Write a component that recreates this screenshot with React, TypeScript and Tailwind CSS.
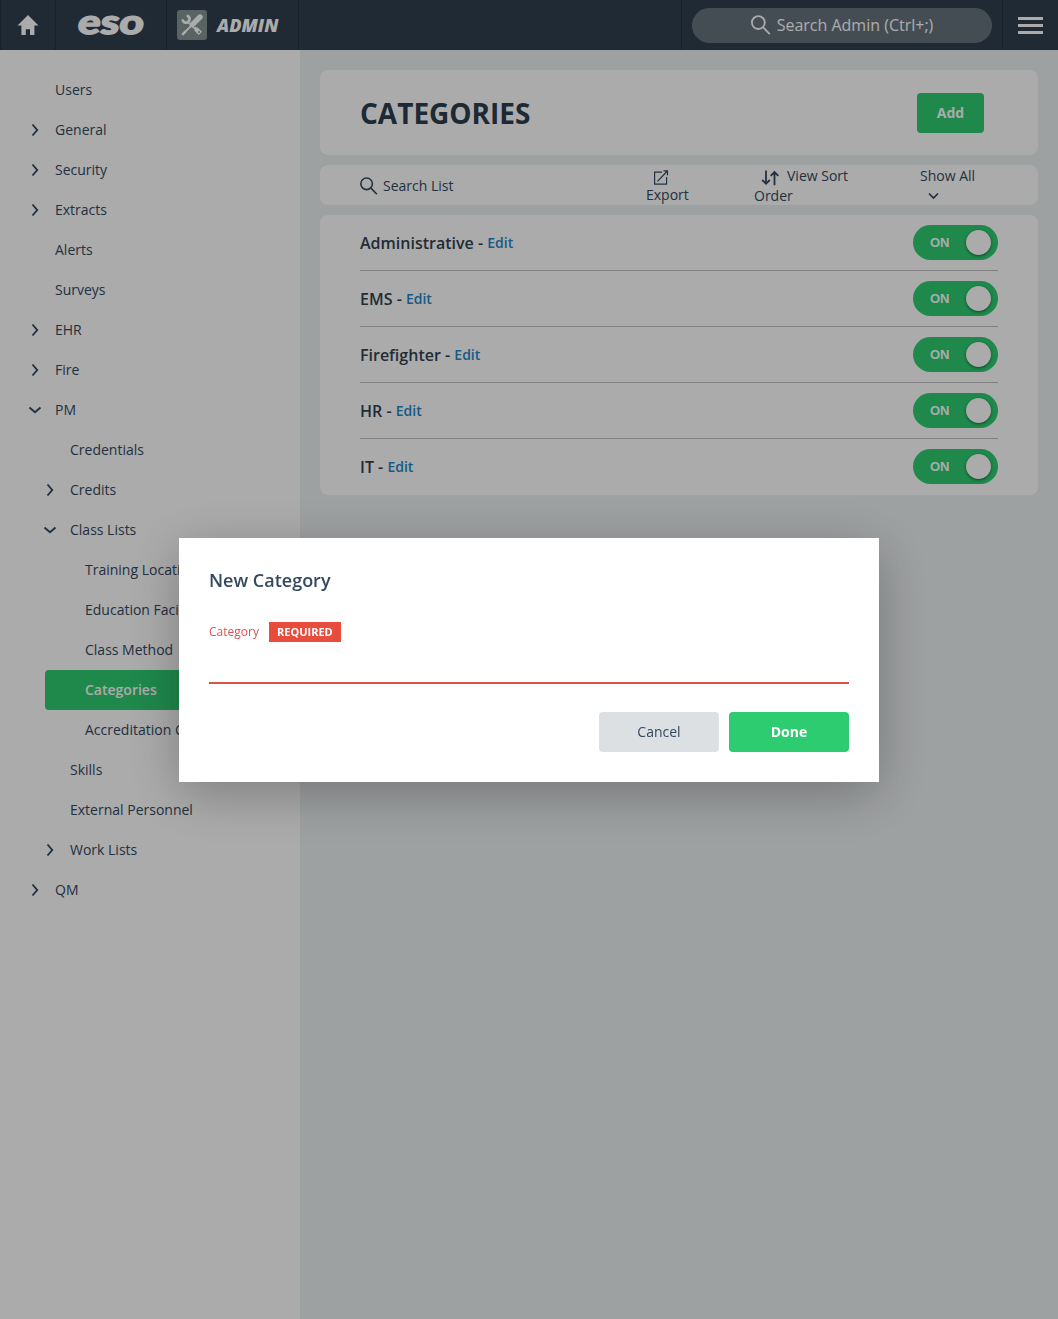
import { useState } from 'react';

type NavItem = {
  label: string;
  level: 0 | 1 | 2;
  state?: 'open' | 'closed';
  active?: boolean;
};

const navItems: NavItem[] = [
  { label: 'Users', level: 0 },
  { label: 'General', level: 0, state: 'closed' },
  { label: 'Security', level: 0, state: 'closed' },
  { label: 'Extracts', level: 0, state: 'closed' },
  { label: 'Alerts', level: 0 },
  { label: 'Surveys', level: 0 },
  { label: 'EHR', level: 0, state: 'closed' },
  { label: 'Fire', level: 0, state: 'closed' },
  { label: 'PM', level: 0, state: 'open' },
  { label: 'Credentials', level: 1 },
  { label: 'Credits', level: 1, state: 'closed' },
  { label: 'Class Lists', level: 1, state: 'open' },
  { label: 'Training Locations', level: 2 },
  { label: 'Education Facilities', level: 2 },
  { label: 'Class Method', level: 2 },
  { label: 'Categories', level: 2, active: true },
  { label: 'Accreditation Codes', level: 2 },
  { label: 'Skills', level: 1 },
  { label: 'External Personnel', level: 1 },
  { label: 'Work Lists', level: 1, state: 'closed' },
  { label: 'QM', level: 0, state: 'closed' },
];

const levelMargin = ['ml-[15px]', 'ml-[30px]', 'ml-[45px]'];

const categories = ['Administrative', 'EMS', 'Firefighter', 'HR', 'IT'];

function Chevron({ open }: { open: boolean }) {
  return (
    <svg width="14" height="14" viewBox="0 0 14 14" fill="none" stroke="currentColor" strokeWidth="1.9">
      <path d={open ? 'M1.5 4.5 7 9.2l5.5-4.7' : 'M4.5 1.5 9.2 7l-4.7 5.5'} />
    </svg>
  );
}

function SearchIcon({ size }: { size: number }) {
  return (
    <svg width={size} height={size} viewBox="0 0 18 18" fill="none" stroke="currentColor" strokeWidth="1.6">
      <circle cx="6.6" cy="6.8" r="5.8" />
      <path d="m10.7 10.9 6.2 6.3" />
    </svg>
  );
}

function Header() {
  return (
    <header className="flex h-[50px] items-stretch bg-[#2f3f50] text-white">
      <div className="flex w-14 items-center justify-center border-x border-[#263442]">
        <svg width="22" height="20" viewBox="0 0 22 20" fill="currentColor">
          <path d="M11 0 .5 10.4h3.9V20h4.4v-5.8h4.2V20h4.4v-9.6h4.1z" />
        </svg>
      </div>
      <div className="flex w-[111px] items-center justify-center border-r border-[#263442]">
        <svg width="90" height="50" viewBox="0 0 90 50" fill="currentColor">
          <text
            x="15"
            y="34.5"
            textLength="66"
            lengthAdjust="spacingAndGlyphs"
            transform="skewX(-7)"
            className="font-['Lato'] text-[34px] font-black"
            stroke="currentColor"
            strokeWidth="1.4"
          >
            eso
          </text>
        </svg>
      </div>
      <div className="flex w-[132px] items-center border-r border-[#263442] pl-2.5">
        <span className="flex size-[30px] items-center justify-center rounded-[3px] bg-[#839492]">
          <svg width="22" height="22" viewBox="0 0 22 22" fill="none" stroke="currentColor">
            <path d="M6.5 6.5 16 16" strokeWidth="3" />
            <path d="M14.8 14.8 19.4 19.4" strokeWidth="4.6" />
            <circle cx="18" cy="18" r="1" fill="#839492" stroke="none" />
            <path d="M5.6 1.7A3.5 3.5 0 1 1 1.6 5.4" strokeWidth="2.6" />
            <path d="M11 11 18.6 3.4" strokeWidth="7.4" stroke="#839492" />
            <path d="M11.4 10.6 19 3" strokeWidth="5.4" strokeLinecap="round" />
            <path d="M11 11 3 19" strokeWidth="1.8" />
            <path d="m1.2 20.8 3.6-3.6" strokeWidth="2.6" />
          </svg>
        </span>
        <span className="mt-0.5 ml-2.5 text-[18px] font-extrabold italic">ADMIN</span>
      </div>
      <div className="ml-auto flex w-[322px] items-center justify-center border-x border-[#263442]">
        <div className="mt-px flex h-[35px] w-[300px] items-center justify-center gap-1.5 rounded-full bg-[#67737e] pb-0.5 text-base">
          <SearchIcon size={20} />
          <span>Search Admin (Ctrl+;)</span>
        </div>
      </div>
      <div className="flex w-[55px] flex-col items-center justify-center gap-1 pt-px">
        <span className="h-[3px] w-[25px] bg-white" />
        <span className="h-[3px] w-[25px] bg-white" />
        <span className="h-[3px] w-[25px] bg-white" />
      </div>
    </header>
  );
}

function Sidebar() {
  return (
    <nav className="w-[300px] shrink-0 bg-white pt-5">
      {navItems.map(item => (
        <a
          key={item.label}
          className={`flex h-10 items-center rounded-l ${levelMargin[item.level]} ${
            item.active ? 'bg-[#2ecc71] font-semibold text-white' : ''
          }`}
        >
          <span className="flex w-10 justify-center">{item.state && <Chevron open={item.state === 'open'} />}</span>
          <span className="whitespace-nowrap">{item.label}</span>
        </a>
      ))}
    </nav>
  );
}

function Toolbar() {
  return (
    <div className="mt-2.5 flex h-10 items-start rounded-lg bg-white pl-10 leading-5">
      <div className="flex h-10 w-[286px] items-center gap-[5px] pt-0.5">
        <SearchIcon size={18} />
        <span>Search List</span>
      </div>
      <div className="flex w-[43px] flex-col pt-[5px]">
        <svg className="ml-[7px]" width="16" height="15" viewBox="0 0 16 15" fill="none" stroke="currentColor" strokeWidth="1.2">
          <path d="M9 2.2H1.6v12h12V7M4.5 11.4 14.3 1M10.5.8h4v4.4" />
        </svg>
        <span>Export</span>
      </div>
      <div className="ml-[65px] w-[100px] pt-px">
        <svg
          className="mr-2 ml-[7px] inline-block align-[-5px]"
          width="18"
          height="16"
          viewBox="0 0 18 16"
          fill="none"
          stroke="currentColor"
          strokeWidth="1.8"
        >
          <path d="M5 .5v13M1.2 10 5 13.8 8.8 10M13.5 15.2v-13M9.7 5.8 13.5 2l3.8 3.8" />
        </svg>
        View Sort Order
      </div>
      <div className="ml-[66px] flex w-[60px] flex-col pt-px">
        <span>Show All</span>
        <svg className="mt-1.5 ml-[7.5px]" width="11" height="8" viewBox="0 0 11 8" fill="none" stroke="currentColor" strokeWidth="1.7">
          <path d="M1 1.5 5.5 6 10 1.5" />
        </svg>
      </div>
    </div>
  );
}

function CategoryRow({ name }: { name: string }) {
  return (
    <li className="flex h-14 items-center justify-between border-b border-[#bfbfbf] last:border-b-transparent">
      <div className="text-base font-semibold text-[#34424f]">
        {name} - <a className="align-[1px] text-sm text-[#2387c6]">Edit</a>
      </div>
      <div className="flex h-[35px] w-[85px] items-center justify-between rounded-full bg-[#2ecc71] pr-[7px] pl-[17px]">
        <span className="pt-0.5 font-['Liberation_Sans'] text-[13px] font-bold text-white">ON</span>
        <span className="size-[25px] rounded-full bg-white shadow-[0_1px_3px_rgba(0,0,0,0.5)]" />
      </div>
    </li>
  );
}

function NewCategoryModal() {
  const [name, setName] = useState('');

  return (
    <div className="fixed inset-0 flex items-center justify-center bg-black/33">
      <div className="mt-px h-[244px] w-[700px] bg-white px-[30px] pt-[30px] shadow-[0_12px_50px_rgba(0,0,0,0.27)]">
        <h2 className="text-lg leading-6 font-semibold">New Category</h2>
        <div className="mt-[30px] flex h-5 items-center gap-2.5">
          <label className="text-xs text-[#d9534f]">Category</label>
          <span className="flex h-5 w-[72px] items-center justify-center bg-[#e74c3c] text-[11px] font-bold text-white">
            REQUIRED
          </span>
        </div>
        <input
          className="block h-[42px] w-full border-b-2 border-[#d9534f] outline-none"
          value={name}
          onChange={e => setName(e.target.value)}
        />
        <div className="mt-7 flex justify-end gap-2.5">
          <button className="h-10 w-[120px] rounded bg-[#dce0e3]">Cancel</button>
          <button className="h-10 w-[120px] rounded bg-[#2ecc71] font-bold text-white">Done</button>
        </div>
      </div>
    </div>
  );
}

export default function App() {
  return (
    <div className="flex h-screen min-h-[1319px] flex-col overflow-hidden bg-[#ecf0f1] font-['Open_Sans',sans-serif] text-sm text-[#34495e]">
      <Header />
      <div className="flex flex-1">
        <Sidebar />
        <main className="flex-1 p-5">
          <div className="flex h-[85px] items-center justify-between rounded-lg bg-white pr-[54px] pl-10">
            <h1 className="text-[28px] font-bold text-[#2c3e50]">CATEGORIES</h1>
            <button className="h-10 w-[67px] rounded bg-[#2ecc71] font-bold text-white">Add</button>
          </div>
          <Toolbar />
          <ul className="mt-2.5 rounded-lg bg-white px-10">
            {categories.map(name => (
              <CategoryRow key={name} name={name} />
            ))}
          </ul>
        </main>
      </div>
      <NewCategoryModal />
    </div>
  );
}
